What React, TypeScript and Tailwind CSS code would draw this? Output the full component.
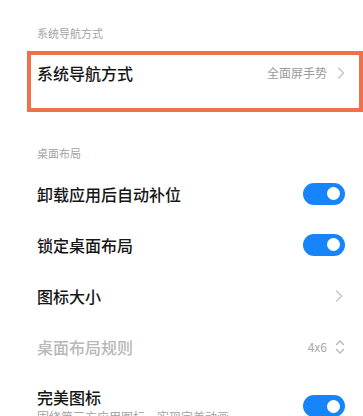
import React from 'react';

const Chevron = () => (
  <svg width="8" height="12" viewBox="0 0 8 12" fill="none" className="shrink-0">
    <path d="M1.5 1 L6.5 6 L1.5 11" stroke="#c4c4c4" strokeWidth="1.3" strokeLinecap="round" strokeLinejoin="round" />
  </svg>
);

const UpDown = () => (
  <svg width="10" height="16" viewBox="0 0 10 16" fill="none" className="shrink-0">
    <path d="M1.5 5.5 L5 2 L8.5 5.5" stroke="#b5b5b5" strokeWidth="1.3" strokeLinecap="round" strokeLinejoin="round" />
    <path d="M1.5 10.5 L5 14 L8.5 10.5" stroke="#b5b5b5" strokeWidth="1.3" strokeLinecap="round" strokeLinejoin="round" />
  </svg>
);

const Toggle = () => (
  <div className="w-[42px] h-[22px] rounded-full bg-[#1684fb] flex items-center justify-end pr-[5px] shrink-0">
    <div className="w-[13px] h-[13px] rounded-full bg-white" />
  </div>
);

function SectionTitle({ children }: { children: React.ReactNode }) {
  return <div className="pl-[37px] text-[11px] leading-[16px] text-[#a3a3a8]">{children}</div>;
}

function Row({ title, right, disabled }: { title: string; right: React.ReactNode; disabled?: boolean }) {
  return (
    <div className="h-[51px] flex items-center justify-between pl-[37px] pr-[18px]">
      <span className={`text-[16px] leading-[22px] font-medium ${disabled ? 'text-[#b8b8b8]' : 'text-[#151515]'}`}>{title}</span>
      {right}
    </div>
  );
}

export default function App() {
  return (
    <div
      className="w-[363px] h-[416px] overflow-hidden bg-white"
      style={{ fontFamily: '"Noto Sans CJK SC", "Noto Sans", sans-serif' }}
    >
      <div className="pt-[25px]">
        <SectionTitle>系统导航方式</SectionTitle>

        <div className="mt-[10px] ml-[27px] h-[61px] border-4 border-[#ef7149]">
          <div className="flex items-center justify-between pt-[7px] pl-[6px] pr-[14px]">
            <span className="text-[16px] leading-[22px] font-medium text-[#151515]">系统导航方式</span>
            <div className="flex items-center gap-[10px]">
              <span className="text-[12px] leading-[18px] text-[#9a9a9a]">全面屏手势</span>
              <Chevron />
            </div>
          </div>
        </div>

        <div className="mt-[33px]">
          <SectionTitle>桌面布局</SectionTitle>
        </div>

        <div className="mt-[7px]">
          <Row title="卸载应用后自动补位" right={<Toggle />} />
          <Row title="锁定桌面布局" right={<Toggle />} />
          <Row title="图标大小" right={<div className="pr-[2px]"><Chevron /></div>} />
          <Row
            title="桌面布局规则"
            disabled
            right={
              <div className="flex items-center gap-[8px]">
                <span className="text-[12px] leading-[18px] text-[#a8a8a8]">4x6</span>
                <UpDown />
              </div>
            }
          />
          <div className="flex items-center justify-between pl-[37px] pr-[18px] pt-[14px]">
            <div className="flex flex-col">
              <span className="text-[16px] leading-[22px] font-medium text-[#151515]">完美图标</span>
              <span className="text-[12px] leading-[18px] text-[#a3a3a3] whitespace-nowrap">围绕第三方应用图标，实现完美动画</span>
            </div>
            <Toggle />
          </div>
        </div>
      </div>
    </div>
  );
}
